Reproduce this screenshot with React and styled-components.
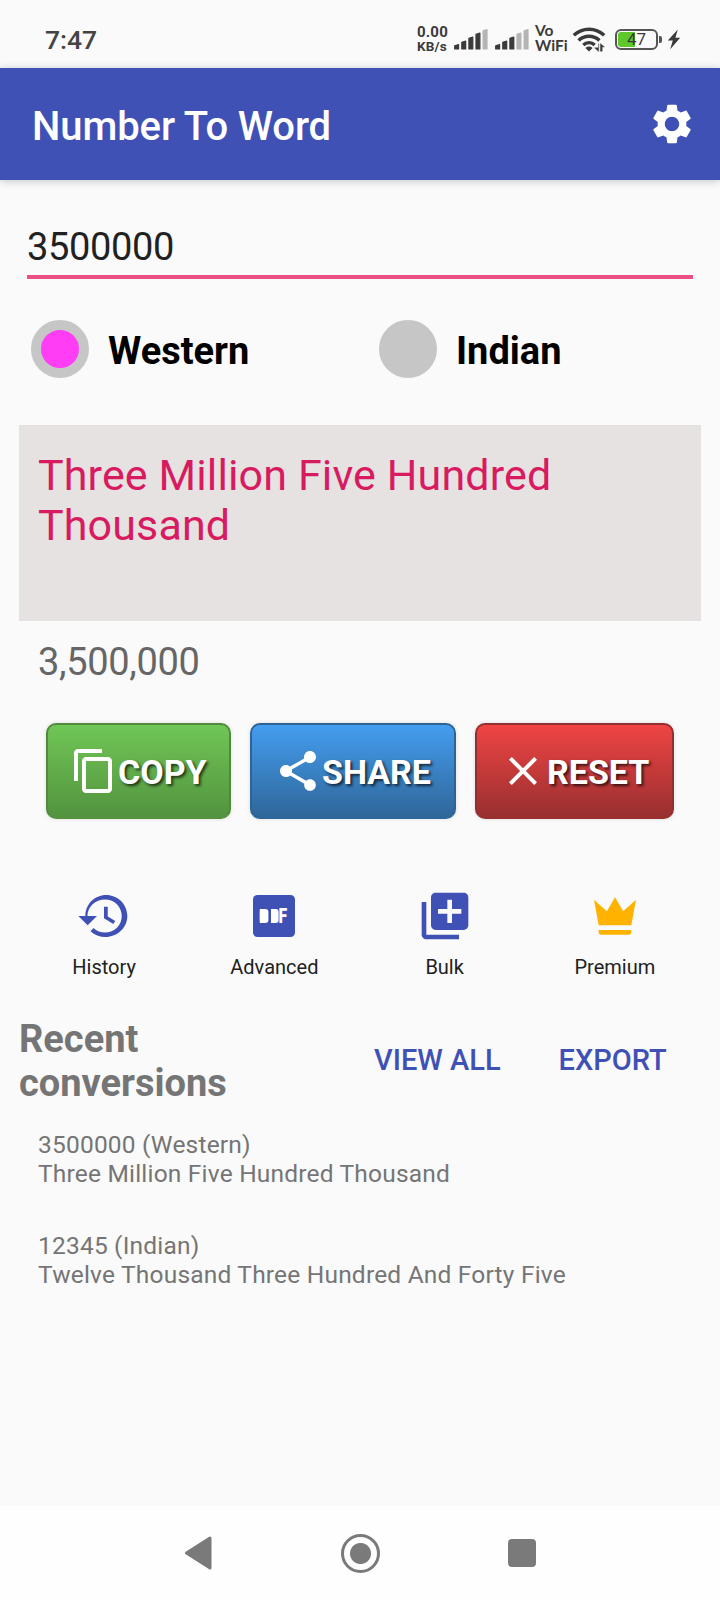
import React from "react";
import styled, { createGlobalStyle } from "styled-components";

const recent = [
	{ input: "3500000 (Western)", words: "Three Million Five Hundred Thousand" },
	{
		input: "12345 (Indian)",
		words: "Twelve Thousand Three Hundred And Forty Five",
	},
];

const Signal = ({ level }) => {
	const tops = [15, 11.5, 7.5, 3.5, 0];
	return (
		<svg width="34" height="21" viewBox="0 0 34 21">
			{tops.map((top, i) => (
				<path
					key={top}
					d={`M${i * 7.1 + 0.7} 20V${top + 1.8}l3.9-1.2V20z`}
					fill={i < level ? "#3a3a3a" : "#b4b4b4"}
					stroke={i < level ? "#3a3a3a" : "#b4b4b4"}
					strokeWidth="1.2"
					strokeLinejoin="round"
				/>
			))}
		</svg>
	);
};

const WifiIcon = () => (
	<svg width="34" height="26" viewBox="0 0 34 26">
		<g fill="none" stroke="#3a3a3a" strokeWidth="3.4">
			<path d="M1.8 9.3a22 22 0 0 1 30.4 0" />
			<path d="M6.6 14.4a15 15 0 0 1 20.8 0" />
			<path d="M11.3 18.9a8.4 8.4 0 0 1 11.4 0" />
		</g>
		<path d="M17 25.4l-3.6-3.4a5.2 5.2 0 0 1 7.2 0z" fill="#3a3a3a" />
		<path
			d="M26.6 17.5v4.3h-4l4 3.7zM28.4 25.3v-7.8l4 3.5h-2.2v4.3z"
			fill="#3a3a3a"
			stroke="#3a3a3a"
			strokeWidth="0.4"
		/>
	</svg>
);

const CopyIcon = () => (
	<svg width="48" height="48" viewBox="0 0 24 24" fill="#fff">
		<path d="M16 1H4c-1.1 0-2 .9-2 2v14h2V3h12V1zm3 4H8c-1.1 0-2 .9-2 2v14c0 1.1.9 2 2 2h11c1.1 0 2-.9 2-2V7c0-1.1-.9-2-2-2zm0 16H8V7h11v14z" />
	</svg>
);

const ShareIcon = () => (
	<svg width="48" height="48" viewBox="0 0 24 24" fill="#fff">
		<path d="M18 16.08c-.76 0-1.44.3-1.96.77L8.91 12.7c.05-.23.09-.46.09-.7s-.04-.47-.09-.7l7.05-4.11c.54.5 1.25.81 2.04.81 1.66 0 3-1.34 3-3s-1.34-3-3-3-3 1.34-3 3c0 .24.04.47.09.7L8.04 9.81C7.5 9.31 6.79 9 6 9c-1.66 0-3 1.34-3 3s1.34 3 3 3c.79 0 1.5-.31 2.04-.81l7.12 4.16c-.05.21-.08.43-.08.65 0 1.61 1.31 2.92 2.92 2.92s2.92-1.31 2.92-2.92-1.31-2.92-2.92-2.92z" />
	</svg>
);

const ClearIcon = () => (
	<svg width="48" height="48" viewBox="0 0 24 24" fill="#fff">
		<path d="M19 6.41L17.59 5 12 10.59 6.41 5 5 6.41 10.59 12 5 17.59 6.41 19 12 13.41 17.59 19 19 17.59 13.41 12z" />
	</svg>
);

const SettingsIcon = () => (
	<svg width="48" height="48" viewBox="0 0 24 24" fill="#fff">
		<path d="M19.14,12.94c0.04-0.3,0.06-0.61,0.06-0.94c0-0.32-0.02-0.64-0.07-0.94l2.03-1.58c0.18-0.14,0.23-0.41,0.12-0.61 l-1.92-3.32c-0.12-0.22-0.37-0.29-0.59-0.22l-2.39,0.96c-0.5-0.38-1.03-0.7-1.62-0.94L14.4,2.81c-0.04-0.24-0.24-0.41-0.48-0.41 h-3.84c-0.24,0-0.43,0.17-0.47,0.41L9.25,5.35C8.66,5.59,8.12,5.92,7.63,6.29L5.24,5.33c-0.22-0.08-0.47,0-0.59,0.22L2.74,8.87 C2.62,9.08,2.66,9.34,2.86,9.48l2.03,1.58C4.84,11.36,4.8,11.69,4.8,12s0.02,0.64,0.07,0.94l-2.03,1.58 c-0.18,0.14-0.23,0.41-0.12,0.61l1.92,3.32c0.12,0.22,0.37,0.29,0.59,0.22l2.39-0.96c0.5,0.38,1.03,0.7,1.62,0.94l0.36,2.54 c0.05,0.24,0.24,0.41,0.48,0.41h3.84c0.24,0,0.44-0.17,0.47-0.41l0.36-2.54c0.59-0.24,1.13-0.56,1.62-0.94l2.39,0.96 c0.22,0.08,0.47,0,0.59-0.22l1.92-3.32c0.12-0.22,0.07-0.47-0.12-0.61L19.14,12.94z M12,15.6c-1.98,0-3.6-1.62-3.6-3.6 s1.62-3.6,3.6-3.6s3.6,1.62,3.6,3.6S13.98,15.6,12,15.6z" />
	</svg>
);

const HistoryIcon = () => (
	<svg width="56" height="56" viewBox="0 0 24 24" fill="#3f51b5">
		<path d="M12.9 3C8 3 4 7 4 12H1l4 4 4-4H4.9C4.9 8 8.3 4.9 12.5 4.9c4 0 7.1 3.2 7.1 7.1s-3.1 7.1-7.1 7.1c-1.9 0-3.7-.7-5-2l-1.3 1.4C7.9 20.1 10.2 21 12.6 21 17.8 21 22 17 22 12s-4.1-9-9.1-9z" />
		<path d="M12 8v5l4 2.4.8-1.3-3.2-1.9V8z" />
	</svg>
);

const DocumentIcon = () => (
	<svg width="56" height="56" viewBox="0 0 56 56">
		<rect x="7" y="7" width="42" height="42" rx="4.5" fill="#3f51b5" />
		<g fill="#fff">
			<rect x="13.8" y="21" width="5" height="14" />
			<rect x="13.8" y="21" width="8.6" height="14" rx="3" />
			<rect x="25" y="21" width="5" height="14" />
			<rect x="25" y="21" width="7.6" height="14" rx="3" />
			<text x="32.4" y="35" fontSize="19.5" fontWeight="900" textLength="8.6" lengthAdjust="spacingAndGlyphs">
				F
			</text>
		</g>
	</svg>
);

const BulkIcon = () => (
	<svg width="56" height="56" viewBox="0 0 24 24" fill="#3f51b5">
		<path d="M4 6H2v14c0 1.1.9 2 2 2h14v-2H4V6zm16-4H8c-1.1 0-2 .9-2 2v12c0 1.1.9 2 2 2h12c1.1 0 2-.9 2-2V4c0-1.1-.9-2-2-2zm-1 9h-4v4h-2v-4H9V9h4V5h2v4h4v2z" />
	</svg>
);

const CrownIcon = () => (
	<svg width="56" height="56" viewBox="0 0 24 24" fill="#ffb300">
		<path d="M5 16L3 5l5.5 5L12 4l3.5 6L21 5l-2 11H5zm14 3c0 .6-.4 1-1 1H6c-.6 0-1-.4-1-1v-1h14v1z" />
	</svg>
);

const StatusBar = () => (
	<Status>
		<Clock>7:47</Clock>
		<Speed>
			<span>0.00</span>
			<small>KB/s</small>
		</Speed>
		<Signal level={4} />
		<SecondSignal>
			<Signal level={3} />
		</SecondSignal>
		<VoWifi>
			Vo
			<br />
			WiFi
		</VoWifi>
		<WifiIcon />
		<Battery>
			<BatteryLevel>47</BatteryLevel>
			<BatteryTip />
		</Battery>
		<svg width="14" height="21" viewBox="0 0 14 21">
			<path d="M10.8.5L.8 11.6h5L3.2 20.2 13.2 8.8H8.4z" fill="#3a3a3a" />
		</svg>
	</Status>
);

const App = () => {
	return (
		<Screen>
			<GlobalStyle />
			<StatusBar />
			<AppBar>
				<Title>Number To Word</Title>
				<SettingsIcon />
			</AppBar>
			<Main>
				<NumberField>3500000</NumberField>
				<Systems>
					<System>
						<Radio $checked />
						<SystemName>Western</SystemName>
					</System>
					<System>
						<Radio />
						<SystemName>Indian</SystemName>
					</System>
				</Systems>
				<Result>Three Million Five Hundred Thousand</Result>
				<Formatted>3,500,000</Formatted>
				<Actions>
					<Action $width={185} $from="#70c656" $to="#53933f" $edge="#51893f">
						<CopyIcon />
						<span>COPY</span>
					</Action>
					<Action $width={206} $from="#449def" $to="#2f6699" $edge="#2e6395">
						<ShareIcon />
						<span>SHARE</span>
					</Action>
					<Action $width={199} $from="#ef4444" $to="#992f2f" $edge="#913030">
						<ClearIcon />
						<span>RESET</span>
					</Action>
				</Actions>
				<Tiles>
					<Tile>
						<HistoryIcon />
						<TileName>History</TileName>
					</Tile>
					<Tile>
						<DocumentIcon />
						<TileName>Advanced</TileName>
					</Tile>
					<Tile>
						<BulkIcon />
						<TileName>Bulk</TileName>
					</Tile>
					<Tile>
						<CrownIcon />
						<TileName>Premium</TileName>
					</Tile>
				</Tiles>
				<RecentHeader>
					<RecentTitle>Recent conversions</RecentTitle>
					<TextButton>VIEW ALL</TextButton>
					<TextButton>EXPORT</TextButton>
				</RecentHeader>
				<RecentList>
					{recent.map((item) => (
						<RecentItem key={item.input}>
							<div>{item.input}</div>
							<div>{item.words}</div>
						</RecentItem>
					))}
				</RecentList>
			</Main>
			<NavBar>
				<svg width="28" height="36" viewBox="0 0 28 36">
					<path d="M2.5 18L26 3v30z" fill="#7a7a7a" stroke="#7a7a7a" strokeWidth="3" strokeLinejoin="round" />
				</svg>
				<HomeButton />
				<RecentsButton />
			</NavBar>
		</Screen>
	);
};

export default App;

const GlobalStyle = createGlobalStyle`
	body {
		margin: 0;
		background: #fafafa;
		font-family: Roboto, "Liberation Sans", sans-serif;
	}
	svg {
		display: block;
		flex-shrink: 0;
	}
`;

const Screen = styled.div`
	width: 720px;
	height: 1600px;
	display: flex;
	flex-direction: column;
	background: #fafafa;
	overflow: hidden;
`;

const Status = styled.div`
	height: 68px;
	box-sizing: border-box;
	padding: 10px 39px 0 45px;
	display: flex;
	align-items: center;
	color: #3a3a3a;
`;

const Clock = styled.div`
	flex: 1;
	font-size: 26.5px;
	font-weight: 500;
	color: #444;
`;

const Speed = styled.div`
	width: 37px;
	display: flex;
	flex-direction: column;
	font-size: 15px;
	font-weight: 700;
	line-height: 14px;
	letter-spacing: 0.2px;
	small {
		font-size: 13.5px;
	}
`;

const SecondSignal = styled.div`
	margin: 0 6px 0 7px;
`;

const VoWifi = styled.div`
	width: 37px;
	padding-bottom: 2px;
	font-family: Lato, sans-serif;
	font-size: 15.5px;
	font-weight: 700;
	line-height: 15px;
`;

const Battery = styled.div`
	position: relative;
	width: 43px;
	height: 21px;
	box-sizing: border-box;
	margin: 0 9px;
	padding: 1px;
	border: 2px solid #555;
	border-radius: 6px;
`;

const BatteryLevel = styled.div`
	height: 15px;
	border-radius: 3px;
	background: linear-gradient(90deg, #5ec72c 47%, transparent 47%);
	font-size: 17px;
	line-height: 15px;
	text-align: center;
`;

const BatteryTip = styled.div`
	position: absolute;
	top: 5px;
	right: -6px;
	width: 3px;
	height: 7px;
	border-radius: 0 2px 2px 0;
	background: #555;
`;

const AppBar = styled.div`
	height: 112px;
	box-sizing: border-box;
	padding: 0 24px 0 32px;
	display: flex;
	align-items: center;
	justify-content: space-between;
	background: #3f51b5;
	box-shadow: 0 1px 8px rgba(0, 0, 0, 0.22);
`;

const Title = styled.div`
	padding-top: 4px;
	color: white;
	font-size: 40px;
	font-weight: 500;
	letter-spacing: -0.1px;
`;

const Main = styled.div`
	flex: 1;
	padding: 45px 19px 0;
`;

const NumberField = styled.div`
	height: 50px;
	margin: 0 8px;
	border-bottom: 4px solid #ec4f85;
	color: #212121;
	font-size: 38px;
	line-height: 44px;
	letter-spacing: -0.35px;
`;

const Systems = styled.div`
	display: grid;
	grid-template-columns: 348px 1fr;
	margin: 41px 0 0 12px;
`;

const System = styled.div`
	display: flex;
	align-items: center;
	gap: 19px;
`;

const Radio = styled.div`
	width: 58px;
	height: 58px;
	box-sizing: border-box;
	border: 10px solid #c6c6c6;
	border-radius: 50%;
	background: ${(props) => (props.$checked ? "#ff3df5" : "#c6c6c6")};
`;

const SystemName = styled.div`
	padding-top: 4px;
	color: black;
	font-size: 38px;
	font-weight: 700;
`;

const Result = styled.div`
	height: 196px;
	box-sizing: border-box;
	margin-top: 47px;
	padding: 25px 19px;
	background: #e6e2e2;
	color: #d81b60;
	font-size: 43px;
	line-height: 50px;
	letter-spacing: 0.13px;
`;

const Formatted = styled.div`
	margin: 19px 19px 0;
	color: #666;
	font-size: 38px;
	line-height: 44px;
	letter-spacing: -0.33px;
`;

const Actions = styled.div`
	display: flex;
	gap: 19px;
	margin: 39px 0 0 27px;
`;

const Action = styled.div`
	width: ${(props) => props.$width}px;
	height: 96px;
	box-sizing: border-box;
	padding-left: 22px;
	display: flex;
	align-items: center;
	border: 2px solid ${(props) => props.$edge};
	border-bottom-color: ${(props) => props.$to};
	border-radius: 10px;
	background: linear-gradient(${(props) => props.$from}, ${(props) => props.$to});
	box-shadow: 0 0 4px rgba(0, 0, 0, 0.12);
	color: white;
	font-size: 34px;
	font-weight: 700;
	text-shadow: 2px 2px 3px rgba(0, 0, 0, 0.7);
	span {
		padding-top: 2px;
	}
`;

const Tiles = styled.div`
	display: grid;
	grid-template-columns: repeat(4, 1fr);
	margin: 69px 1px 0 0;
`;

const Tile = styled.div`
	display: flex;
	flex-direction: column;
	align-items: center;
	gap: 11px;
`;

const TileName = styled.div`
	color: #212121;
	font-size: 20px;
	line-height: 24px;
`;

const RecentHeader = styled.div`
	display: flex;
	align-items: center;
	margin-top: 38px;
	padding-right: 16px;
	gap: 58px;
`;

const RecentTitle = styled.div`
	flex: 1;
	color: #757575;
	font-size: 38px;
	font-weight: 700;
	line-height: 44px;
	max-width: 297px;
`;

const TextButton = styled.div`
	padding-bottom: 2px;
	color: #3f51b5;
	font-size: 29px;
	font-weight: 500;
	white-space: nowrap;
`;

const RecentList = styled.div`
	display: flex;
	flex-direction: column;
	gap: 43px;
	margin: 25px 19px 0;
`;

const RecentItem = styled.div`
	color: #757575;
	font-size: 24.5px;
	line-height: 29px;
	letter-spacing: 0.2px;
`;

const NavBar = styled.div`
	height: 94px;
	box-sizing: border-box;
	padding: 0 184px;
	display: flex;
	align-items: center;
	justify-content: space-between;
	background: #fefefe;
`;

const HomeButton = styled.div`
	width: 21px;
	height: 21px;
	padding: 6px;
	border: 3px solid #7a7a7a;
	border-radius: 50%;
	background: radial-gradient(circle, #7a7a7a 10px, transparent 11px);
`;

const RecentsButton = styled.div`
	width: 28px;
	height: 28px;
	border-radius: 4px;
	background: #7a7a7a;
`;
